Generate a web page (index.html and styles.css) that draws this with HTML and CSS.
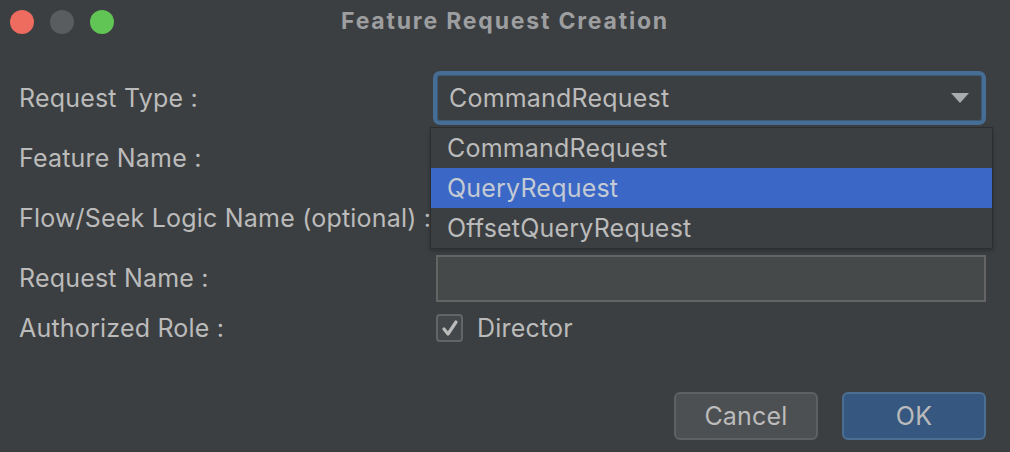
FILE: index.html
```html
<!DOCTYPE html>
<html>
<head>
<meta charset="utf-8">
<link rel="stylesheet" href="styles.css">
</head>
<body>
<div class="window">
  <header class="titlebar">
    <div class="lights">
      <span class="light red"></span>
      <span class="light gray"></span>
      <span class="light green"></span>
    </div>
    <div class="title">Feature Request Creation</div>
  </header>

  <main class="form">
    <div class="label">Request Type :</div>
    <div class="control combo-wrap">
      <div class="combo">
        <span class="combo-text">CommandRequest</span>
        <svg class="arrow" width="18" height="10" viewBox="0 0 18 10"><path d="M0 0H18L9 10Z" fill="#a9abad"/></svg>
      </div>
      <ul class="popup">
        <li class="item">CommandRequest</li>
        <li class="item selected">QueryRequest</li>
        <li class="item">OffsetQueryRequest</li>
      </ul>
    </div>

    <div class="label">Feature Name :</div>
    <div class="control"><div class="field"></div></div>

    <div class="label">Flow/Seek Logic Name (optional) :</div>
    <div class="control"><div class="field"></div></div>

    <div class="label">Request Name :</div>
    <div class="control"><div class="field"></div></div>

    <div class="label">Authorized Role :</div>
    <div class="control check-row">
      <span class="checkbox">
        <svg width="20" height="18" viewBox="0 0 20 18"><path d="M4 10L8 15L16 3" fill="none" stroke="#bbbbbb" stroke-width="3.2" stroke-linecap="round" stroke-linejoin="round"/></svg>
      </span>
      <span class="check-label">Director</span>
    </div>
  </main>

  <footer class="buttons">
    <button class="btn cancel">Cancel</button>
    <button class="btn ok">OK</button>
  </footer>
</div>
</body>
</html>
```

FILE: styles.css
```css
html, body {
  margin: 0;
  padding: 0;
  background: #3c3f41;
}
body {
  width: 1010px;
  height: 452px;
  overflow: hidden;
  font-family: Inter, "Liberation Sans", sans-serif;
  color: #bbbbbb;
}
.window {
  width: 1010px;
  height: 452px;
  display: flex;
  flex-direction: column;
}
.titlebar {
  position: relative;
  height: 44px;
  display: flex;
  align-items: center;
  justify-content: center;
}
.lights {
  position: absolute;
  left: 10px;
  top: 10px;
  display: flex;
  gap: 16px;
}
.light {
  width: 24px;
  height: 24px;
  border-radius: 50%;
  display: block;
}
.red { background: #ed6b5f; }
.gray { background: #5a5d60; }
.green { background: #61c555; }
.title {
  font-weight: bold;
  font-size: 23px;
  letter-spacing: 1.8px;
  color: #9c9ea0;
  margin-top: -2px;
}
.form {
  position: relative;
  display: grid;
  grid-template-columns: 417px 550px;
  grid-template-rows: 60px 60px 60px 60px 40px;
  margin-top: 24px;
  padding-left: 19px;
  letter-spacing: 0.2px;
}
.label {
  font-size: 25px;
  display: flex;
  align-items: center;
  white-space: nowrap;
  color: #bbbbbb;
}
.control {
  display: flex;
  align-items: center;
}
.combo-wrap {
  position: relative;
}
.combo {
  box-sizing: border-box;
  width: 556px;
  height: 54px;
  margin-left: -3px;
  border: 4px solid #466d94;
  border-radius: 7px;
  background: #3c3f41;
  display: flex;
  align-items: center;
  padding-left: 12px;
  padding-right: 13px;
  box-shadow: inset 0 0 0 1px #3b5a7a;
}
.combo-text {
  font-size: 25px;
  flex: 1;
}
.arrow {
  display: block;
}
.field {
  box-sizing: border-box;
  width: 550px;
  height: 47px;
  border: 2px solid #646464;
  background: #45494a;
}
.popup {
  position: absolute;
  left: -6px;
  top: 59px;
  width: 563px;
  margin: 0;
  padding: 0;
  list-style: none;
  background: #3c3f41;
  border: 1px solid #2c2e30;
  box-sizing: border-box;
  box-shadow: 0 2px 4px rgba(0,0,0,0.25);
  z-index: 2;
}
.item {
  height: 40px;
  font-size: 25px;
  display: flex;
  align-items: center;
  padding-left: 16px;
  color: #bbbbbb;
}
.item.selected {
  background: #3b67c6;
  color: #c4cad4;
}
.check-row {
  gap: 14px;
}
.checkbox {
  box-sizing: border-box;
  width: 27px;
  height: 28px;
  border: 2px solid #636668;
  border-radius: 4px;
  background: #43474a;
  display: flex;
  align-items: center;
  justify-content: center;
}
.checkbox svg { display: block; }
.check-label {
  font-size: 25px;
}
.buttons {
  display: flex;
  justify-content: flex-end;
  gap: 24px;
  padding-right: 24px;
  margin-top: 44px;
}
.btn {
  box-sizing: border-box;
  width: 144px;
  height: 48px;
  border-radius: 6px;
  font-family: Inter, "Liberation Sans", sans-serif;
  font-size: 25px;
  letter-spacing: 0.2px;
  color: #bbbbbb;
  padding: 0;
}
.cancel {
  background: #4c5052;
  border: 2px solid #5e6163;
}
.ok {
  background: #365880;
  border: 2px solid #4b6f93;
}
```
